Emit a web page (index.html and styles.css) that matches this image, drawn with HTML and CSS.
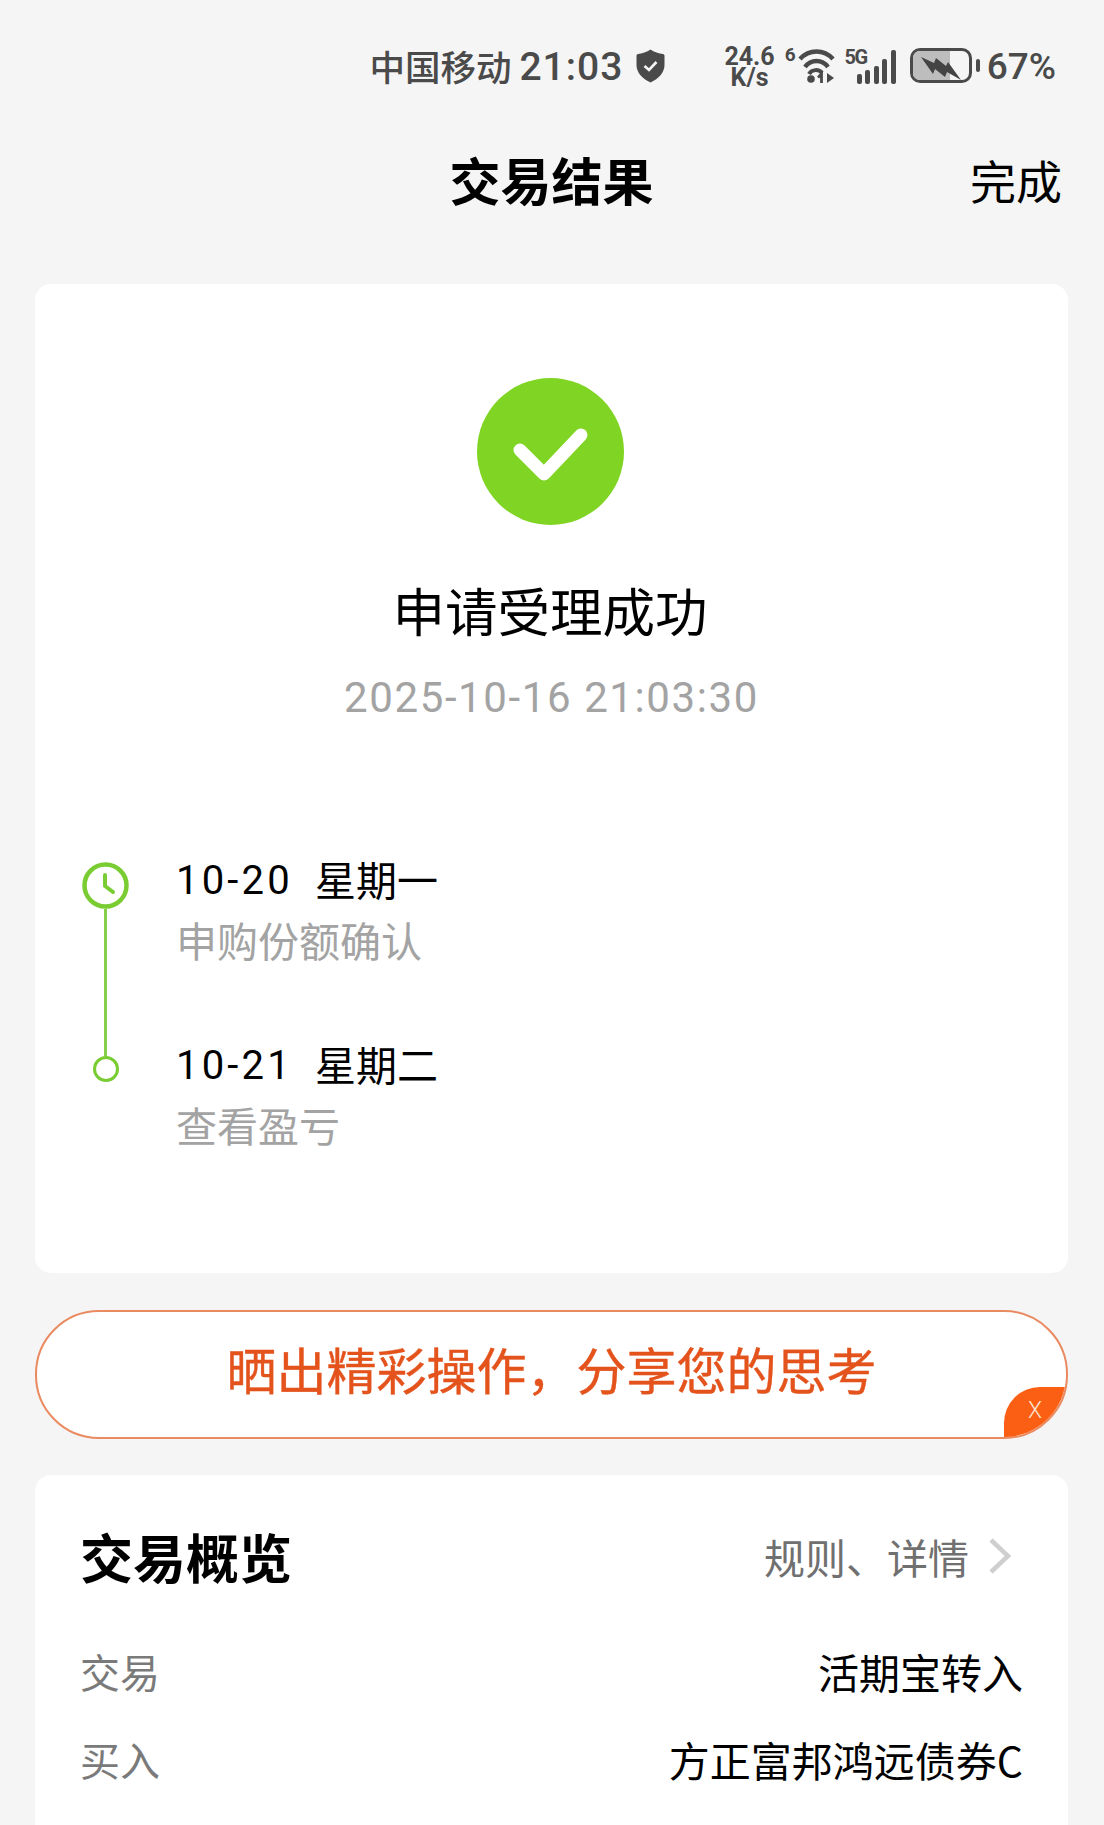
FILE: index.html
```html
<!DOCTYPE html>
<html lang="zh-CN">
<head>
<meta charset="utf-8">
<title>交易结果</title>
<link rel="stylesheet" href="styles.css">
</head>
<body>
<div class="page">

  <div class="statusbar">
    <span class="carrier">中国移动</span>
    <span class="clock">21:03</span>
    <svg class="shield" width="29" height="34" viewBox="0 0 29 34">
      <path d="M14.5 0.5 C18 3 23 4.5 27 5 C28 5 28.5 6 28.5 7 V16 C28.5 24 22 30 14.5 33.5 C7 30 0.5 24 0.5 16 V7 C0.5 6 1 5 2 5 C6 4.5 11 3 14.5 0.5 Z" fill="#4a4a4a"/>
      <path d="M8.5 17 L13 21 L20.5 13" fill="none" stroke="#f5f5f5" stroke-width="2.6"/>
    </svg>
    <div class="speed"><span>24.6</span><span>K/s</span></div>
    <span class="wifi-six">6</span>
    <svg class="wifi" width="37" height="35" viewBox="0 0 37 35">
      <path d="M2 11 C11 1 26 1 35 11" fill="none" stroke="#4a4a4a" stroke-width="4.5"/>
      <path d="M7 19 C13 11 24 11 30 19" fill="none" stroke="#4a4a4a" stroke-width="4.5"/>
      <path d="M11 26 C14 21 21 21 24 25" fill="none" stroke="#4a4a4a" stroke-width="4"/>
      <circle cx="13" cy="31" r="3.8" fill="#4a4a4a"/>
      <path d="M23.5 35 V26 L20 29.5" fill="none" stroke="#4a4a4a" stroke-width="2.8"/>
      <path d="M29 25 V35 L36 30 Z" fill="#4a4a4a"/>
    </svg>
    <span class="five-g">5G</span>
    <div class="signal">
      <i class="bar bar1"></i><i class="bar bar2"></i><i class="bar bar3"></i><i class="bar bar4"></i><i class="bar bar5"></i>
    </div>
    <div class="battery">
      <div class="battery-body">
        <div class="battery-fill"></div>
        <svg class="bolt" width="40" height="24" viewBox="0 0 40 24">
          <path d="M0 0 L13 6 L15 1 L25 9 L27 5 L40 23 L26 15 L24 20 L14 12 L12 17 Z" fill="#444"/>
        </svg>
      </div>
      <i class="battery-cap"></i>
    </div>
    <span class="percent">67%</span>
  </div>

  <div class="navbar">
    <span></span>
    <h1 class="nav-title">交易结果</h1>
    <a class="nav-done">完成</a>
  </div>

  <div class="card result-card">
    <svg class="ok-icon" width="147" height="147" viewBox="0 0 147 147">
      <circle cx="73.5" cy="73.5" r="73.5" fill="#80d423"/>
      <path d="M43 72 L67 96 L104 57" fill="none" stroke="#fff" stroke-width="13" stroke-linecap="round" stroke-linejoin="round"/>
    </svg>
    <div class="result-title">申请受理成功</div>
    <div class="result-time">2025-10-16 21:03:30</div>

    <div class="timeline">
      <div class="rail">
        <svg width="47" height="47" viewBox="0 0 47 47">
          <circle cx="23.5" cy="23.5" r="21" fill="none" stroke="#79cc31" stroke-width="4.5"/>
          <path d="M23 13 V24 L31 30" fill="none" stroke="#79cc31" stroke-width="4" stroke-linecap="round" stroke-linejoin="round"/>
        </svg>
        <i class="rail-line"></i>
        <i class="rail-dot"></i>
      </div>
      <div class="steps">
        <div class="step">
          <div class="step-date"><span class="num">10-20</span><span class="week">星期一</span></div>
          <div class="step-desc">申购份额确认</div>
        </div>
        <div class="step">
          <div class="step-date"><span class="num">10-21</span><span class="week">星期二</span></div>
          <div class="step-desc">查看盈亏</div>
        </div>
      </div>
    </div>
  </div>

  <div class="share-banner">
    晒出精彩操作，分享您的思考
    <span class="banner-close">X</span>
  </div>

  <div class="card summary-card">
    <div class="summary-head">
      <h2 class="summary-title">交易概览</h2>
      <div class="summary-link">
        规则、详情
        <svg width="24" height="38" viewBox="0 0 24 38">
          <path d="M3 3 L20 19 L3 35" fill="none" stroke="#cfcfcf" stroke-width="4.5"/>
        </svg>
      </div>
    </div>
    <div class="row"><span class="row-label">交易</span><span class="row-value">活期宝转入</span></div>
    <div class="row"><span class="row-label">买入</span><span class="row-value">方正富邦鸿远债券C</span></div>
  </div>

</div>
</body>
</html>
```

FILE: styles.css
```css
* {
  box-sizing: border-box;
}

html, body {
  margin: 0;
  padding: 0;
}

body {
  background: #f5f5f5;
  font-family: "Noto Sans CJK SC", "Noto Sans", sans-serif;
  color: #000;
}

.page {
  width: 1104px;
  height: 1825px;
  overflow: hidden;
  padding: 0 36px 0 35px;
}

/* status bar */
.statusbar {
  height: 112px;
  margin-right: 12px;
  padding: 22px 0 0;
  display: flex;
  align-items: center;
  justify-content: flex-end;
  color: #4a4a4a;
}

.carrier {
  font-size: 35.5px;
  font-weight: 500;
  line-height: 44px;
  margin-top: -2px;
}

.clock {
  font-family: Roboto, sans-serif;
  font-size: 39px;
  font-weight: 500;
  letter-spacing: 1px;
  margin-left: 8px;
  line-height: 44px;
}

.shield {
  margin: -2px 0 0 13px;
}

.speed {
  margin-left: 59px;
  display: flex;
  flex-direction: column;
  align-items: center;
  font-family: Roboto, sans-serif;
  font-weight: 700;
  font-size: 25px;
  line-height: 21px;
}

.wifi-six {
  font-family: Roboto, sans-serif;
  font-weight: 700;
  font-size: 19px;
  align-self: flex-start;
  margin: 26px 0 0 10px;
  line-height: 14px;
}

.wifi {
  margin: -3px 0 0 2px;
}

.five-g {
  font-family: Roboto, sans-serif;
  font-weight: 700;
  font-size: 20px;
  letter-spacing: -1.5px;
  align-self: flex-start;
  margin: 28px 0 0 10px;
  line-height: 15px;
}

.signal {
  display: flex;
  align-items: flex-end;
  gap: 3.5px;
  height: 34px;
  margin-left: -10px;
}

.bar {
  width: 5px;
  background: #4a4a4a;
  border-radius: 2px;
}

.bar1 { height: 10px; }
.bar2 { height: 14px; }
.bar3 { height: 18px; }
.bar4 { height: 25px; }
.bar5 { height: 34px; }

.battery {
  display: flex;
  align-items: center;
  margin: -3px 0 0 14px;
}

.battery-body {
  position: relative;
  width: 62px;
  height: 35px;
  border: 3.5px solid #4a4a4a;
  border-radius: 10px;
  overflow: hidden;
}

.battery-fill {
  width: 37px;
  height: 100%;
  background: #bdbdbd;
}

.bolt {
  position: absolute;
  left: 8px;
  top: 6px;
}

.battery-cap {
  width: 4px;
  height: 13px;
  margin-left: 4px;
  border-radius: 2px;
  background: #4a4a4a;
}

.percent {
  font-family: Roboto, sans-serif;
  font-size: 37px;
  font-weight: 500;
  margin-left: 7px;
  line-height: 44px;
}

/* nav */
.navbar {
  height: 172px;
  padding-bottom: 39px;
  display: grid;
  grid-template-columns: 1fr auto 1fr;
  align-items: center;
}

.nav-title {
  margin: 0;
  font-size: 51px;
  font-weight: 700;
  line-height: 60px;
}

.nav-done {
  justify-self: end;
  margin-right: 6px;
  font-size: 46px;
  line-height: 60px;
}

/* cards */
.card {
  background: #fff;
  border-radius: 16px;
}

.result-card {
  height: 989px;
  padding-top: 94px;
  display: flex;
  flex-direction: column;
  align-items: center;
}

.ok-icon {
  margin-right: 2px;
}

.result-title {
  margin: 40px 3px 0 0;
  font-size: 52.5px;
  line-height: 88px;
}

.result-time {
  margin-top: 20px;
  font-family: Roboto, sans-serif;
  font-size: 42px;
  letter-spacing: 1.6px;
  line-height: 50px;
  color: #a3a3a3;
}

.timeline {
  align-self: stretch;
  display: flex;
  margin-top: 139px;
  padding-left: 47px;
}

.rail {
  width: 47px;
  display: flex;
  flex-direction: column;
  align-items: center;
}

.rail svg {
  display: block;
  flex: none;
}

.rail-line {
  width: 2.5px;
  height: 147px;
  background: #86cf4b;
}

.rail-dot {
  width: 26px;
  height: 26px;
  border: 3px solid #79cc31;
  border-radius: 50%;
}

.steps {
  margin: -9px 0 0 47px;
}

.step {
  height: 185px;
}

.step-date {
  display: flex;
  align-items: center;
  height: 50px;
  font-size: 41px;
  line-height: 50px;
}

.num {
  font-family: Roboto, sans-serif;
  font-size: 40px;
  width: 139px;
  padding-top: 6px;
  letter-spacing: 3.2px;
}

.step-desc {
  margin-top: 10px;
  font-size: 41px;
  line-height: 52px;
  color: #a3a3a3;
}

/* banner */
.share-banner {
  position: relative;
  overflow: hidden;
  height: 129px;
  margin-top: 37px;
  padding-bottom: 14px;
  display: flex;
  align-items: center;
  justify-content: center;
  background: #fff;
  border: 2px solid #ea8a60;
  border-radius: 64px;
  font-size: 50px;
  color: #e4531c;
  -webkit-text-stroke: 0.4px #e4531c;
}

.banner-close {
  position: absolute;
  right: 0;
  bottom: 0;
  width: 62px;
  height: 50px;
  padding-top: 9px;
  border-top-left-radius: 36px;
  background: #fb5f14;
  color: #ffe3d0;
  -webkit-text-stroke: 0;
  font-family: Roboto, sans-serif;
  font-size: 23px;
  font-weight: 300;
  line-height: 30px;
  text-align: center;
}

/* summary */
.summary-card {
  margin-top: 36px;
  height: 500px;
  padding: 50px 45px 0 45px;
}

.summary-head {
  display: flex;
  align-items: center;
  justify-content: space-between;
  height: 62px;
  margin-bottom: 40px;
}

.summary-title {
  margin: 0;
  font-size: 53px;
  font-weight: 700;
  line-height: 62px;
}

.summary-link {
  display: flex;
  align-items: center;
  gap: 19px;
  padding-right: 11px;
  font-size: 41px;
  color: #707070;
}

.row {
  display: flex;
  justify-content: space-between;
  align-items: center;
  height: 88px;
  font-size: 41px;
}

.row-label {
  font-size: 40px;
  color: #7a7a7a;
}
```
